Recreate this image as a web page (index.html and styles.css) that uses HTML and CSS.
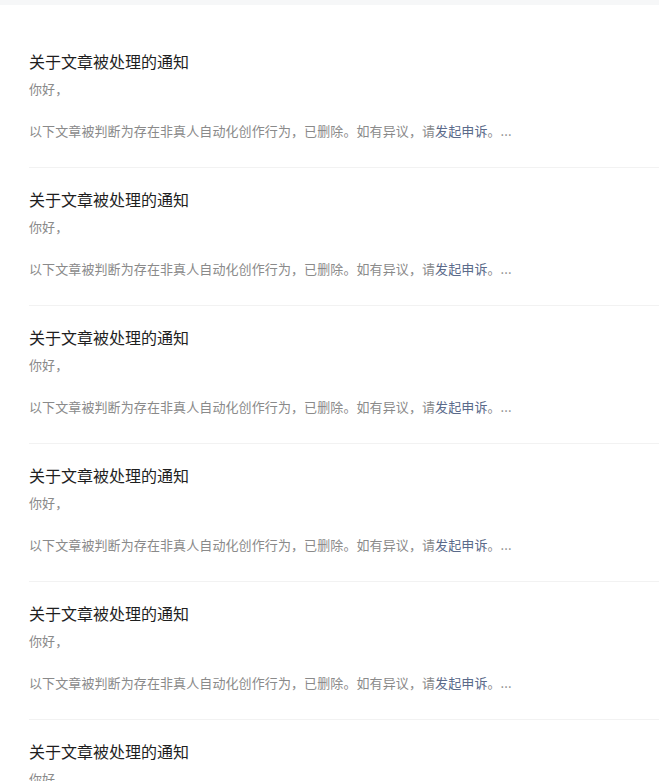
FILE: index.html
```html
<!DOCTYPE html>
<html lang="zh-CN">
<head>
<meta charset="utf-8">
<title>通知</title>
<link rel="stylesheet" href="styles.css">
</head>
<body>
<div class="topbar"></div>
<ul class="list">
  <li class="item">
    <div class="title">关于文章被处理的通知</div>
    <div class="text">你好，<br><br>以下文章被判断为存在非真人自动化创作行为，已删除。如有异议，请<span class="link">发起申诉</span>。...</div>
  </li>
  <li class="item">
    <div class="title">关于文章被处理的通知</div>
    <div class="text">你好，<br><br>以下文章被判断为存在非真人自动化创作行为，已删除。如有异议，请<span class="link">发起申诉</span>。...</div>
  </li>
  <li class="item">
    <div class="title">关于文章被处理的通知</div>
    <div class="text">你好，<br><br>以下文章被判断为存在非真人自动化创作行为，已删除。如有异议，请<span class="link">发起申诉</span>。...</div>
  </li>
  <li class="item">
    <div class="title">关于文章被处理的通知</div>
    <div class="text">你好，<br><br>以下文章被判断为存在非真人自动化创作行为，已删除。如有异议，请<span class="link">发起申诉</span>。...</div>
  </li>
  <li class="item">
    <div class="title">关于文章被处理的通知</div>
    <div class="text">你好，<br><br>以下文章被判断为存在非真人自动化创作行为，已删除。如有异议，请<span class="link">发起申诉</span>。...</div>
  </li>
  <li class="item">
    <div class="title">关于文章被处理的通知</div>
    <div class="text">你好，<br><br>以下文章被判断为存在非真人自动化创作行为，已删除。如有异议，请<span class="link">发起申诉</span>。...</div>
  </li>
</ul>
</body>
</html>
```
FILE: styles.css
```css
html, body {
  margin: 0;
  padding: 0;
  background: #ffffff;
  font-family: "Noto Sans CJK SC", "Liberation Sans", sans-serif;
  overflow: hidden;
}
.topbar {
  height: 5px;
  background: #f6f7f8;
}
.list {
  list-style: none;
  margin: 0;
  padding: 25px 0 0 29px;
}
.item {
  padding: 20px 0 26px;
  border-bottom: 1px solid #f2f2f2;
}
.title {
  font-size: 16px;
  line-height: 22px;
  color: #1f1f1f;
  margin-bottom: 6px;
}
.text {
  font-size: 13px;
  line-height: 21px;
  color: #8a8a8a;
  letter-spacing: 0.1px;
}
.link {
  color: #5a6a8a;
}
```
